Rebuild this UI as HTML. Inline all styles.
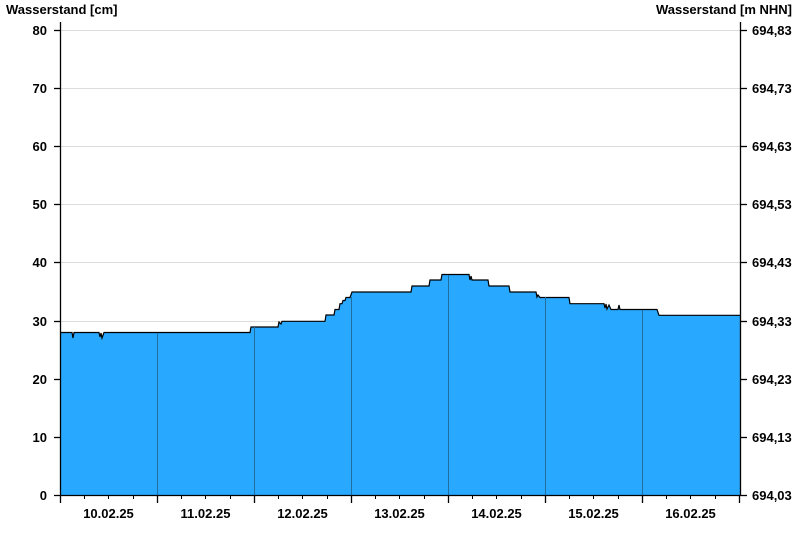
<!DOCTYPE html>
<html><head><meta charset="utf-8"><style>
html,body{margin:0;padding:0;background:#fff;width:800px;height:550px;overflow:hidden}
svg text{font-family:"Liberation Sans",Arial,sans-serif;font-weight:bold;font-size:13px;fill:#000}
</style></head><body>
<svg width="800" height="550" xmlns="http://www.w3.org/2000/svg">
<g stroke="#dcdcdc" stroke-width="1">
<line x1="61" x2="740" y1="30.5" y2="30.5"/>
<line x1="61" x2="740" y1="88.5" y2="88.5"/>
<line x1="61" x2="740" y1="146.5" y2="146.5"/>
<line x1="61" x2="740" y1="204.5" y2="204.5"/>
<line x1="61" x2="740" y1="262.5" y2="262.5"/>
<line x1="61" x2="740" y1="321.5" y2="321.5"/>
<line x1="61" x2="740" y1="379.5" y2="379.5"/>
<line x1="61" x2="740" y1="437.5" y2="437.5"/>
</g>
<path fill="#29a8ff" d="M61,332.5 L72,332.5 L73,338 L74,332.5 L99,332.5 L100,337 L101,333 L102,338 L104,332.5 L250,332.5 L251,327 L253,327 L254,327 L278,327 L279,322 L281,324 L282,321.3 L325,321.3 L326,315 L334,315 L335,309.5 L339,309.5 L340,303.7 L342,303.7 L343,300.5 L345,300.5 L346,297.5 L350,297.5 L352,292 L411,292 L412,286 L429,286 L430,280 L441,280 L442,274.5 L469,274.5 L470,280 L471,276 L472,280 L488,280 L489,286 L509,286 L510,292 L536,292 L537,297 L538,295 L540,297.5 L569,297.5 L570,303.7 L604,303.7 L605,308 L606,304 L607,309 L609,305 L611,309.5 L618,309.5 L619,305 L620,309.5 L657,309.5 L659,315.3 L740,315.3 L740,495.5 L61,495.5 Z"/>
<path fill="none" stroke="#000" stroke-width="1.2" d="M61,332.5 L72,332.5 L73,338 L74,332.5 L99,332.5 L100,337 L101,333 L102,338 L104,332.5 L250,332.5 L251,327 L253,327 L254,327 L278,327 L279,322 L281,324 L282,321.3 L325,321.3 L326,315 L334,315 L335,309.5 L339,309.5 L340,303.7 L342,303.7 L343,300.5 L345,300.5 L346,297.5 L350,297.5 L352,292 L411,292 L412,286 L429,286 L430,280 L441,280 L442,274.5 L469,274.5 L470,280 L471,276 L472,280 L488,280 L489,286 L509,286 L510,292 L536,292 L537,297 L538,295 L540,297.5 L569,297.5 L570,303.7 L604,303.7 L605,308 L606,304 L607,309 L609,305 L611,309.5 L618,309.5 L619,305 L620,309.5 L657,309.5 L659,315.3 L740,315.3"/>
<g stroke="#1f6e9e" stroke-width="1">
<line x1="157.5" x2="157.5" y1="333" y2="495"/>
<line x1="254.5" x2="254.5" y1="327" y2="495"/>
<line x1="351.5" x2="351.5" y1="297" y2="495"/>
<line x1="448.5" x2="448.5" y1="275" y2="495"/>
<line x1="545.5" x2="545.5" y1="297" y2="495"/>
<line x1="642.5" x2="642.5" y1="310" y2="495"/>
</g>
<g stroke="#000" stroke-width="1.3">
<line x1="60.5" x2="60.5" y1="22" y2="503"/>
<line x1="740.5" x2="740.5" y1="22" y2="495"/>
<line x1="54" x2="741" y1="495.5" y2="495.5"/>
<line x1="54" x2="60" y1="30.5" y2="30.5"/><line x1="54" x2="60" y1="88.5" y2="88.5"/><line x1="54" x2="60" y1="146.5" y2="146.5"/><line x1="54" x2="60" y1="204.5" y2="204.5"/><line x1="54" x2="60" y1="262.5" y2="262.5"/><line x1="54" x2="60" y1="321.5" y2="321.5"/><line x1="54" x2="60" y1="379.5" y2="379.5"/><line x1="54" x2="60" y1="437.5" y2="437.5"/>
<line x1="741" x2="747" y1="30.5" y2="30.5"/><line x1="741" x2="747" y1="88.5" y2="88.5"/><line x1="741" x2="747" y1="146.5" y2="146.5"/><line x1="741" x2="747" y1="204.5" y2="204.5"/><line x1="741" x2="747" y1="262.5" y2="262.5"/><line x1="741" x2="747" y1="321.5" y2="321.5"/><line x1="741" x2="747" y1="379.5" y2="379.5"/><line x1="741" x2="747" y1="437.5" y2="437.5"/><line x1="741" x2="747" y1="495.5" y2="495.5"/>
<line x1="157.5" x2="157.5" y1="495" y2="503"/><line x1="254.5" x2="254.5" y1="495" y2="503"/><line x1="351.5" x2="351.5" y1="495" y2="503"/><line x1="448.5" x2="448.5" y1="495" y2="503"/><line x1="545.5" x2="545.5" y1="495" y2="503"/><line x1="642.5" x2="642.5" y1="495" y2="503"/><line x1="739.5" x2="739.5" y1="495" y2="503"/>
</g>
<g stroke="#000" stroke-width="1">
<path d="M84.5,495v4M108.5,495v4M133.5,495v4M181.5,495v4M205.5,495v4M230.5,495v4M278.5,495v4M302.5,495v4M327.5,495v4M375.5,495v4M399.5,495v4M424.5,495v4M472.5,495v4M496.5,495v4M521.5,495v4M569.5,495v4M593.5,495v4M618.5,495v4M666.5,495v4M690.5,495v4M715.5,495v4"/>
</g>
<text x="6" y="14">Wasserstand [cm]</text>
<text x="792" y="14" text-anchor="end">Wasserstand [m NHN]</text>
<g text-anchor="end">
<text x="47" y="35">80</text><text x="47" y="93">70</text><text x="47" y="151">60</text><text x="47" y="209">50</text><text x="47" y="267">40</text><text x="47" y="326">30</text><text x="47" y="384">20</text><text x="47" y="442">10</text><text x="47" y="500">0</text>
</g>
<g>
<text x="752" y="35">694,83</text><text x="752" y="93">694,73</text><text x="752" y="151">694,63</text><text x="752" y="209">694,53</text><text x="752" y="267">694,43</text><text x="752" y="326">694,33</text><text x="752" y="384">694,23</text><text x="752" y="442">694,13</text><text x="752" y="500">694,03</text>
</g>
<g text-anchor="middle">
<text x="108.5" y="518">10.02.25</text><text x="205.5" y="518">11.02.25</text><text x="302.5" y="518">12.02.25</text><text x="399.5" y="518">13.02.25</text><text x="496.5" y="518">14.02.25</text><text x="593.5" y="518">15.02.25</text><text x="690.5" y="518">16.02.25</text>
</g>
</svg>
</body></html>
